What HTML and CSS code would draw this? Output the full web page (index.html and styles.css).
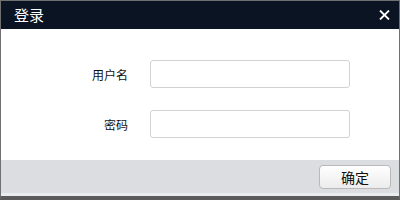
FILE: index.html
```html
<!DOCTYPE html>
<html lang="zh-CN">
<head>
  <meta charset="UTF-8">
  <title>登录</title>
  <link rel="stylesheet" href="styles.css">
</head>
<body>
  <div class="dialog">
    <div class="title-bar">
      <span class="title">登录</span>
      <span class="close">
        <svg width="11" height="10" viewBox="0 0 11 10">
          <path d="M1 0.5 L10 9.5 M10 0.5 L1 9.5" stroke="#fff" stroke-width="1.8" fill="none"/>
        </svg>
      </span>
    </div>

    <div class="content">
      <div class="row">
        <label class="label">用户名</label>
        <input class="field" type="text">
      </div>
      <div class="row">
        <label class="label">密码</label>
        <input class="field" type="password">
      </div>
    </div>

    <div class="footer">
      <button class="ok-button">确定</button>
    </div>
  </div>
</body>
</html>
```

FILE: styles.css
```css
body {
  margin: 0;
  padding: 0;
  font-family: "Noto Sans CJK SC", "Liberation Sans", sans-serif;
  background-color: #fff;
}

.dialog {
  width: 400px;
  height: 200px;
  box-sizing: border-box;
  border: 1px solid #707070;
  border-bottom: 4px solid #5a5a5a;
  display: flex;
  flex-direction: column;
  background-color: #fff;
}

.title-bar {
  height: 28px;
  background-color: #0a1423;
  color: #fff;
  display: flex;
  align-items: center;
  justify-content: space-between;
  padding: 0 9px 0 13px;
}

.title {
  font-size: 15px;
  line-height: 28px;
}

.close {
  display: flex;
  align-items: center;
  cursor: pointer;
}

.content {
  flex: 1;
  padding-top: 31px;
}

.row {
  display: flex;
  align-items: center;
  height: 28px;
  margin-bottom: 22px;
}

.label {
  width: 148px;
  text-align: right;
  font-size: 12px;
  color: #111;
  padding-right: 21px;
  box-sizing: border-box;
}

.field {
  width: 200px;
  height: 28px;
  box-sizing: border-box;
  border: 1px solid #d2d2d2;
  border-radius: 3px;
  margin-left: 1px;
  outline: none;
}

.footer {
  height: 36px;
  background-color: #dcdde0;
  border-bottom: 3px solid #eaebed;
  display: flex;
  align-items: center;
  justify-content: flex-end;
  padding-right: 8px;
}

.ok-button {
  width: 72px;
  height: 24px;
  border: 1px solid #b9b9b9;
  border-radius: 4px;
  background: linear-gradient(#ffffff, #ececec);
  font-family: "Noto Sans CJK SC", sans-serif;
  font-size: 14px;
  color: #111;
  padding: 0;
  cursor: pointer;
}
```
